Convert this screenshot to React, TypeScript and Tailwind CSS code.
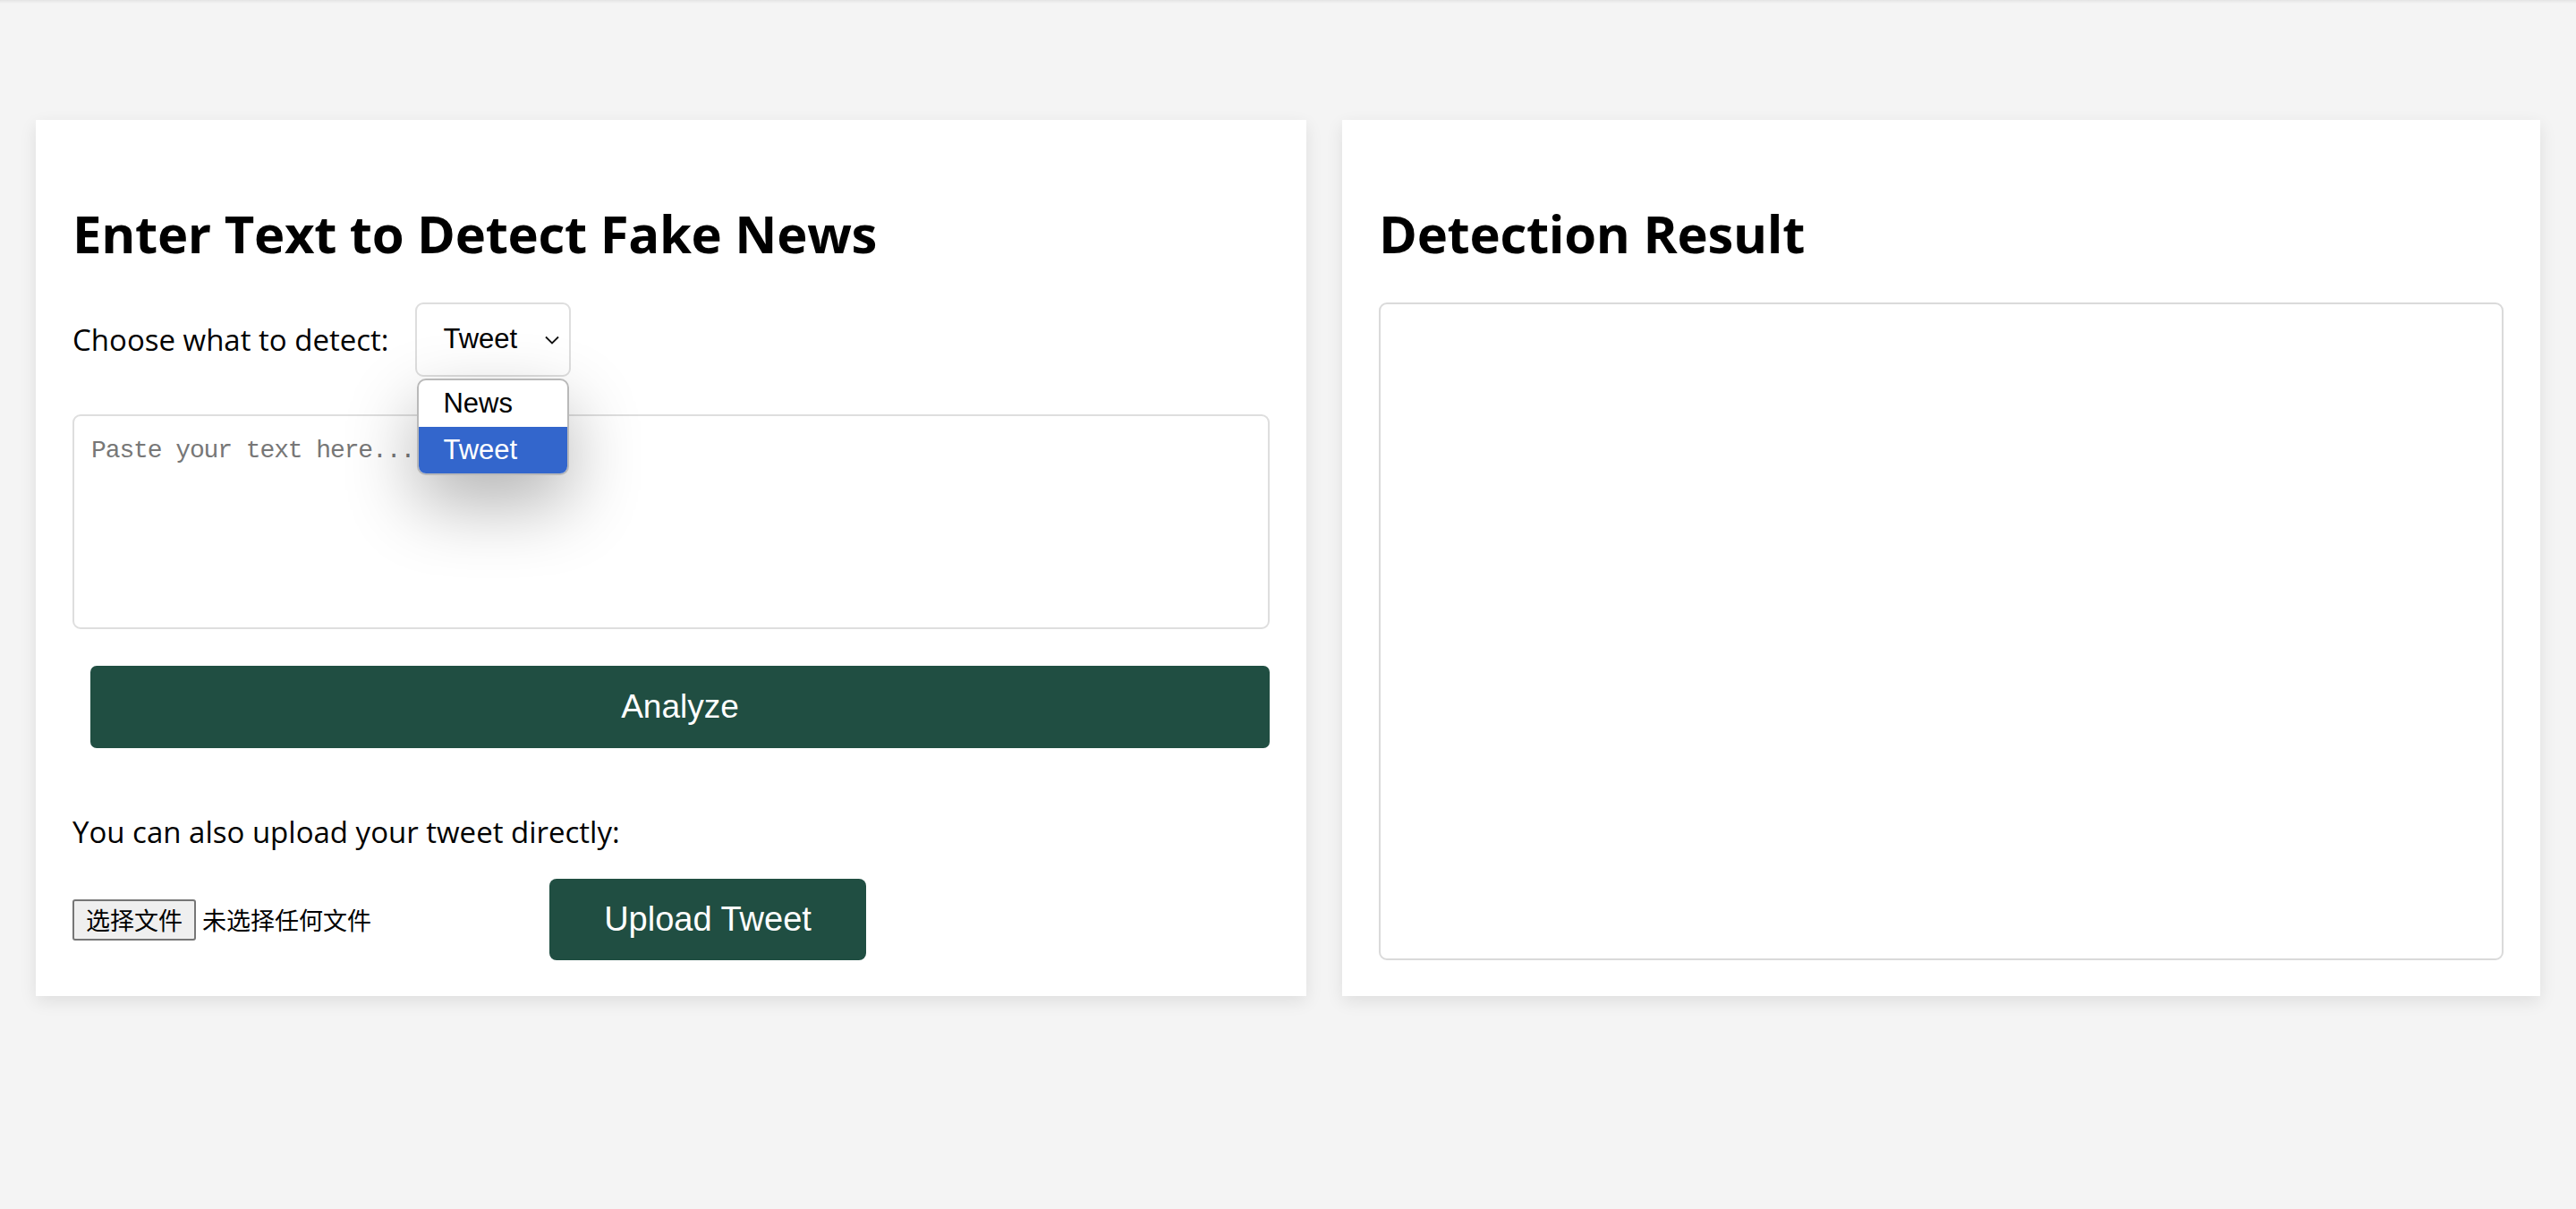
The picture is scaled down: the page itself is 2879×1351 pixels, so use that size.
import React from "react";

function Chevron() {
  return (
    <svg width="18" height="10" viewBox="0 0 18 10" fill="none">
      <path d="M2 1.5L9 8.5L16 1.5" stroke="#111" strokeWidth="1.8" />
    </svg>
  );
}

function FakeSelect() {
  return (
    <div className="relative">
      <div className="flex h-[83px] w-[174px] items-center justify-between rounded-[9px] border-2 border-[#dedede] bg-white pl-[29px] pr-[10px] font-['Liberation_Sans',Arial,sans-serif] text-[31px] text-black">
        <span>Tweet</span>
        <Chevron />
      </div>
      {/* native dropdown popup, shown open */}
      <div className="absolute left-[2px] top-[85px] z-10 w-[170px] overflow-hidden rounded-[10px] border-2 border-[#b9b9b9] bg-white font-['Liberation_Sans',Arial,sans-serif] text-[31px] shadow-[0_32px_80px_rgba(0,0,0,0.3)]">
        <div className="flex h-[52px] items-center pl-[27px] text-black">News</div>
        <div className="flex h-[52px] items-center bg-[#3366cc] pl-[27px] text-white">
          Tweet
        </div>
      </div>
    </div>
  );
}

export default function App() {
  return (
    <div className="min-h-screen bg-[#f4f4f4] font-['Open_Sans','Noto_Sans_CJK_SC',sans-serif] text-black">
      <div className="h-[4px] bg-linear-to-b from-[#e4e4e4] to-[#f4f4f4]" />
      <main className="flex items-stretch gap-[40px] px-[40px] pt-[130px]">
        <section className="flex w-[1420px] flex-col bg-white px-[41px] pb-[40px] pt-[40px] shadow-[0_6px_18px_rgba(0,0,0,0.09)]">
          <h2 className="mt-[52px] text-[58px] font-bold leading-[70px] tracking-[-0.3px]">
            Enter Text to Detect Fake News
          </h2>

          <div className="mt-[42px] flex items-center gap-[30px]">
            <label className="text-[33px] leading-[44px]">
              Choose what to detect:
            </label>
            <FakeSelect />
          </div>

          <textarea
            className="mt-[42px] h-[240px] w-full resize-none rounded-[9px] border-2 border-[#dedede] bg-white px-[19px] pb-[14px] pt-[18px] font-['Liberation_Mono',monospace] text-[28px] tracking-[-1.1px] outline-none placeholder:text-[#777]"
            placeholder="Paste your text here..."
          />

          <button className="ml-[20px] mt-[41px] h-[92px] rounded-[7px] bg-[#204e42] font-['Liberation_Sans',Arial,sans-serif] text-[37px] text-white">
            Analyze
          </button>

          <p className="mt-[72px] text-[33px] leading-[44px]">
            You can also upload your tweet directly:
          </p>

          <div className="mt-[30px] flex items-center">
            <div className="flex w-[533px] items-center gap-[7px] font-['Noto_Sans_CJK_SC',sans-serif] text-[27px]">
              <span className="flex h-[46px] w-[138px] items-center justify-center rounded-[3px] border-2 border-[#767676] bg-[#efefef] leading-none">
                选择文件
              </span>
              <span className="leading-none">未选择任何文件</span>
            </div>
            <button className="h-[91px] w-[354px] rounded-[8px] bg-[#204e42] font-['Liberation_Sans',Arial,sans-serif] text-[38px] text-white">
              Upload Tweet
            </button>
          </div>
        </section>

        <section className="flex flex-1 flex-col bg-white px-[41px] pb-[40px] pt-[40px] shadow-[0_6px_18px_rgba(0,0,0,0.09)]">
          <h2 className="mt-[52px] text-[58px] font-bold leading-[70px] tracking-[-0.3px]">
            Detection Result
          </h2>
          <div className="mt-[42px] flex-1 rounded-[9px] border-2 border-[#dadada] bg-white" />
        </section>
      </main>
    </div>
  );
}
